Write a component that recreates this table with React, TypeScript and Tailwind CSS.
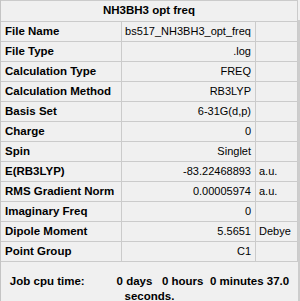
const rows: { label: string; value: string; unit?: string }[] = [
  { label: 'File Name', value: 'bs517_NH3BH3_opt_freq' },
  { label: 'File Type', value: '.log' },
  { label: 'Calculation Type', value: 'FREQ' },
  { label: 'Calculation Method', value: 'RB3LYP' },
  { label: 'Basis Set', value: '6-31G(d,p)' },
  { label: 'Charge', value: '0' },
  { label: 'Spin', value: 'Singlet' },
  { label: 'E(RB3LYP)', value: '-83.22468893', unit: 'a.u.' },
  { label: 'RMS Gradient Norm', value: '0.00005974', unit: 'a.u.' },
  { label: 'Imaginary Freq', value: '0' },
  { label: 'Dipole Moment', value: '5.5651', unit: 'Debye' },
  { label: 'Point Group', value: 'C1' },
];

export default function App() {
  return (
    <div
      className="flex h-[301px] w-[300px] overflow-hidden border-l border-[#c4c4c4] bg-[#f0f0f0] text-black"
      style={{ fontFamily: '"Liberation Sans", Arial, sans-serif' }}>
      <div className="w-[297px] shrink-0">
        <div className="border-t border-b border-r border-[#cbcbcb]">
          <div className="flex h-[20px] items-center justify-center text-[11.5px] font-bold">NH3BH3 opt freq</div>
        </div>
        {rows.map((row) => (
          <div key={row.label} className="flex h-[20px] border-b border-[#cbcbcb]">
            <div className="flex w-[121px] items-center border-r border-[#cbcbcb] pl-[4px] text-[11.5px] font-bold">
              {row.label}
            </div>
            <div className="flex w-[134px] items-center justify-end border-r border-[#cbcbcb] pr-[4px] text-[11px]">
              {row.value}
            </div>
            <div className="flex w-[42px] items-center border-r border-[#cbcbcb] pl-[3px] text-[11px]">
              {row.unit}
            </div>
          </div>
        ))}
        <div className="mt-[12px] text-center text-[11.5px] font-bold leading-[15px]">
          <div className="whitespace-pre">{'Job cpu time:          0 days   0 hours  0 minutes 37.0'}</div>
          <div>seconds.</div>
        </div>
      </div>
      <div className="mt-[20px] w-[2px] bg-[#cdcdcd]" />
    </div>
  );
}
